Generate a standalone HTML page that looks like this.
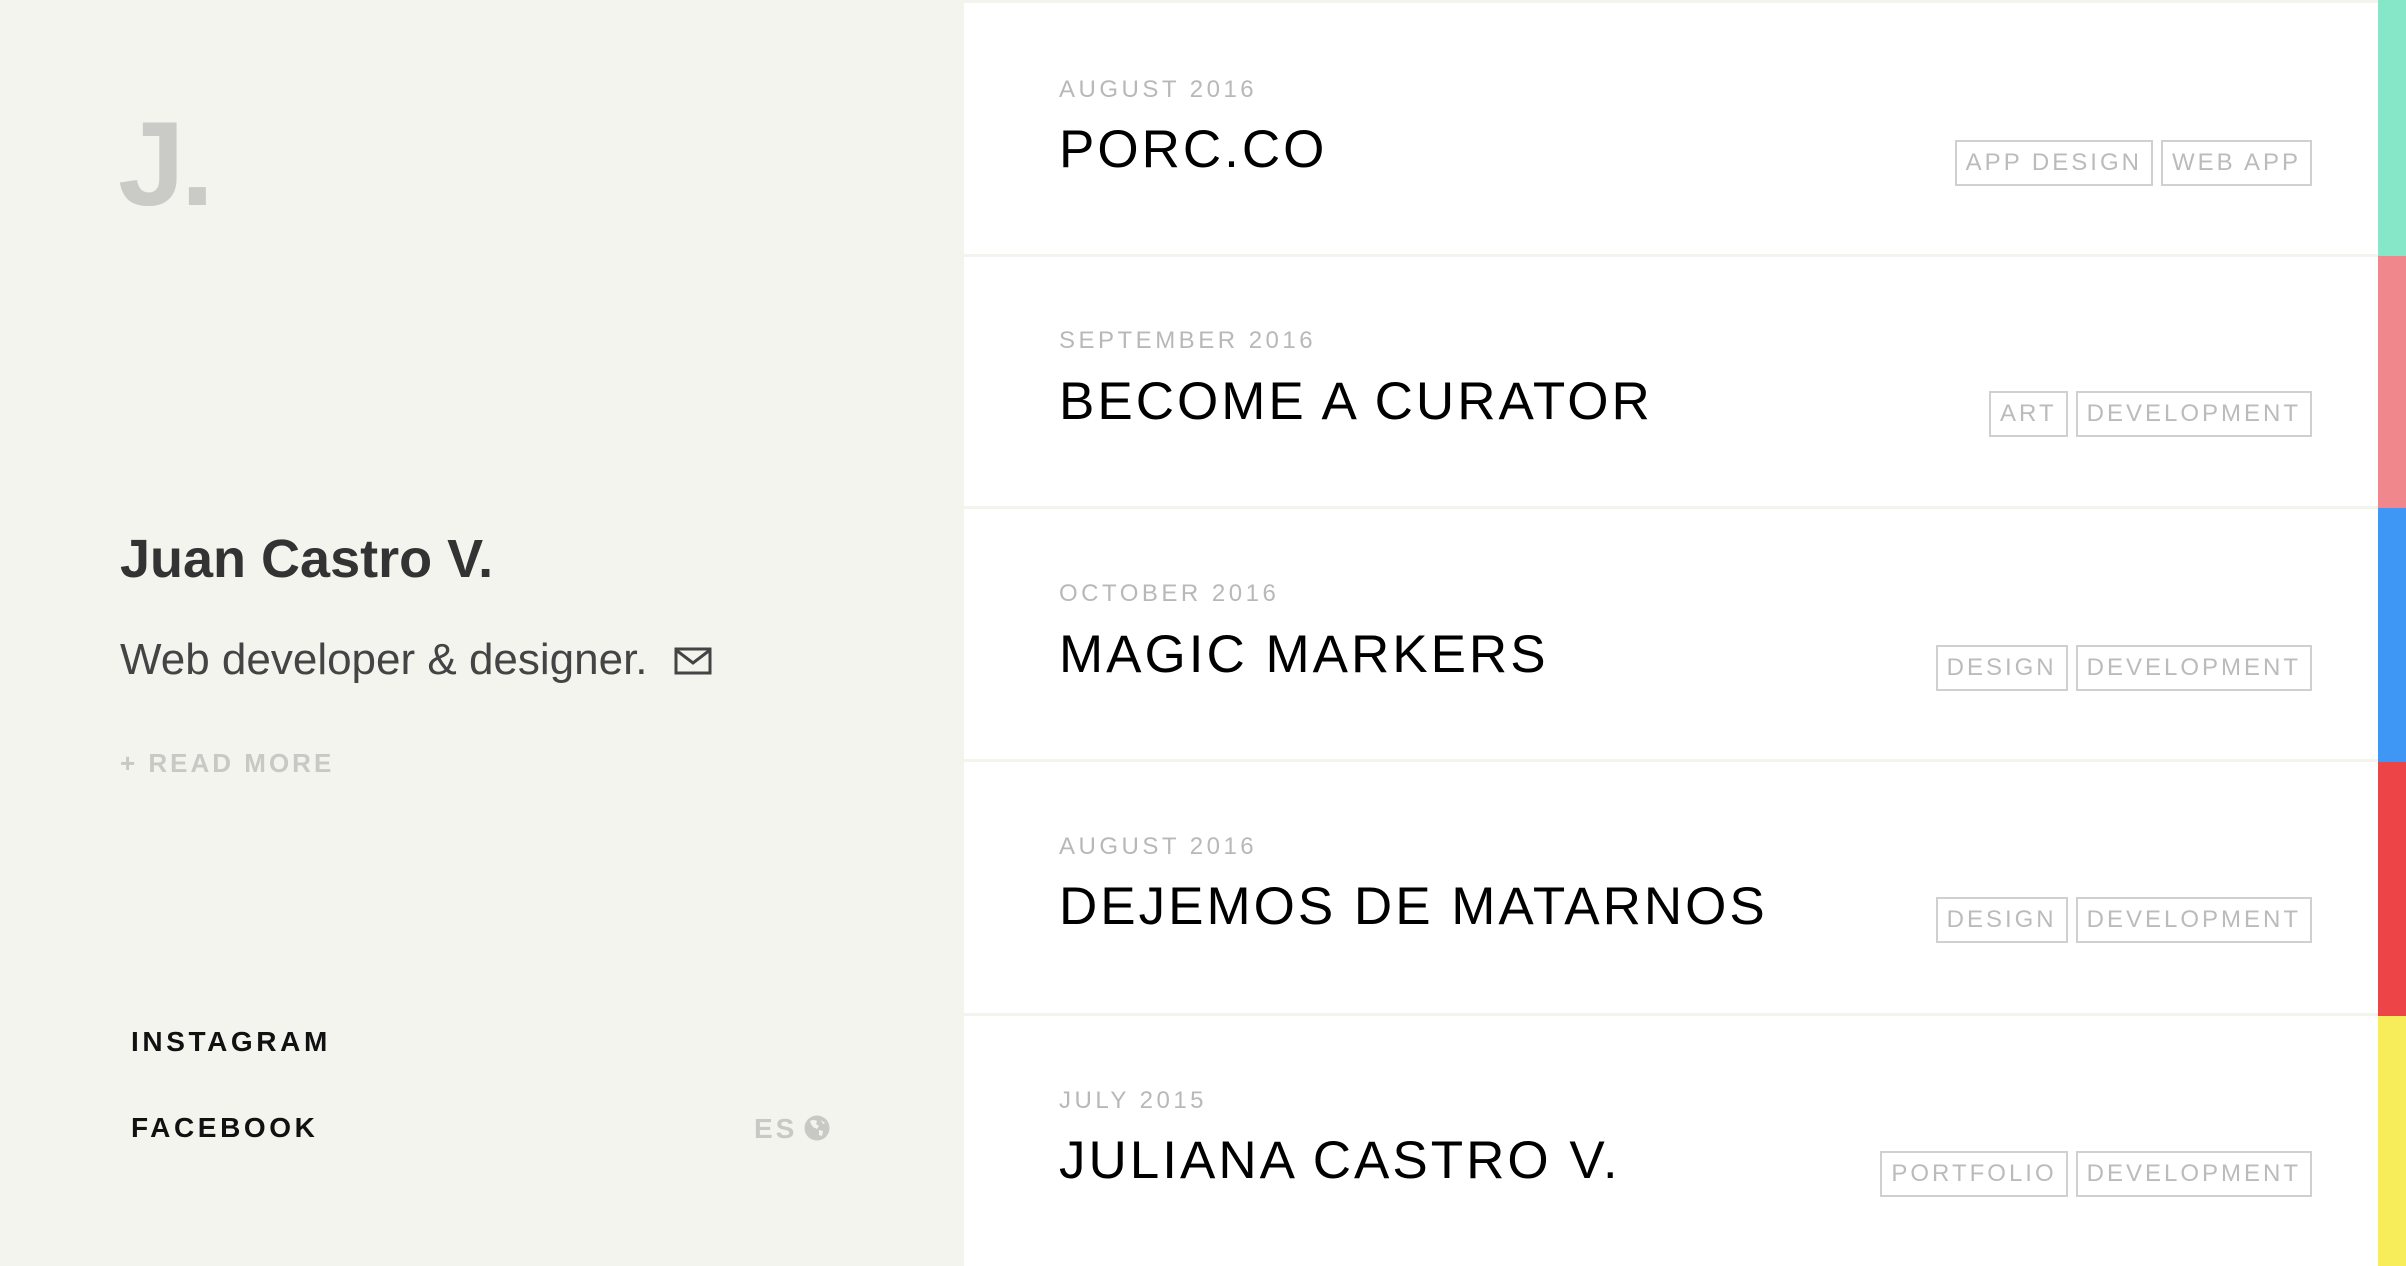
<!DOCTYPE html>
<html><head><meta charset="utf-8"><style>
*{margin:0;padding:0;box-sizing:border-box}
body{width:2406px;height:1266px;overflow:hidden;background:#f4f4ef;font-family:"Liberation Sans",sans-serif;position:relative}
.left{position:absolute;left:0;top:0;width:964px;height:1266px;background:#f4f4ef}
.logo{position:absolute;left:118px;top:104px;font-size:120px;font-weight:bold;color:#cacac6;letter-spacing:-4px;line-height:1}
.name{position:absolute;left:120px;top:532px;font-size:54px;font-weight:bold;color:#333;line-height:1}
.tag{position:absolute;left:120px;top:638px;font-size:44px;color:#444;line-height:1}
.more{position:absolute;left:120px;top:748px;font-size:26px;font-weight:bold;color:#c8c8c4;letter-spacing:3px}
.soc{position:absolute;left:131px;font-size:28px;font-weight:bold;color:#111;letter-spacing:3.6px}
.es{position:absolute;left:754px;top:1113px;font-size:28px;font-weight:bold;color:#c8c8c4;letter-spacing:3px}
.right{position:absolute;left:964px;top:0;width:1414px;height:1266px;background:#f4f4ef}
.row{position:absolute;left:0;width:1414px;background:#fff}
.date{position:absolute;left:95px;font-size:24px;color:#b8b8b8;letter-spacing:3.5px}
.title{position:absolute;left:95px;font-size:53px;color:#000;letter-spacing:3px;line-height:1}
.tags{position:absolute;right:66px;display:flex;gap:8px}
.tags span{border:2px solid #d0d0d0;height:46px;line-height:42px;padding:0 9px;font-size:24px;color:#bbb;letter-spacing:3px}
.bar{position:absolute;left:2378px;width:28px}
</style></head><body>
<div class="left">
<div class="logo">J.</div>
<div class="name">Juan Castro V.</div>
<div class="tag">Web developer &amp; designer. <svg width="38" height="30" viewBox="0 0 38 30" style="margin-left:14px;vertical-align:-2px"><rect x="2" y="3" width="34" height="24" fill="none" stroke="#444" stroke-width="3"/><path d="M2 4 L19 17 L36 4" fill="none" stroke="#444" stroke-width="3"/></svg></div>
<div class="more">+ READ MORE</div>
<div class="soc" style="top:1026px">INSTAGRAM</div>
<div class="soc" style="top:1112px">FACEBOOK</div>
<div class="es">ES</div>
<svg style="position:absolute;left:804px;top:1115px" width="26" height="26" viewBox="0 0 26 26"><circle cx="13" cy="13" r="12.5" fill="#c8c8c4"/><path d="M6 6 Q10 4 13 6 L12 9 L15 11 L13 14 L9 12 L7 9 Z M15 15 L19 16 L18 21 L15 20 Z M17 5 L21 8 L19 9 Z" fill="#f4f4ef"/></svg>
</div>
<div class="right">
<div class="row" style="top:3px;height:251px"><div class="date" style="top:73px">AUGUST 2016</div><div class="title" style="top:120px">PORC.CO</div><div class="tags" style="top:137px"><span>APP DESIGN</span><span>WEB APP</span></div></div>
<div class="row" style="top:257px;height:249px"><div class="date" style="top:70px">SEPTEMBER 2016</div><div class="title" style="top:118px">BECOME A CURATOR</div><div class="tags" style="top:134px"><span>ART</span><span>DEVELOPMENT</span></div></div>
<div class="row" style="top:509px;height:250px"><div class="date" style="top:71px">OCTOBER 2016</div><div class="title" style="top:119px">MAGIC MARKERS</div><div class="tags" style="top:136px"><span>DESIGN</span><span>DEVELOPMENT</span></div></div>
<div class="row" style="top:762px;height:251px"><div class="date" style="top:71px">AUGUST 2016</div><div class="title" style="top:118px">DEJEMOS DE MATARNOS</div><div class="tags" style="top:135px"><span>DESIGN</span><span>DEVELOPMENT</span></div></div>
<div class="row" style="top:1016px;height:250px"><div class="date" style="top:71px">JULY 2015</div><div class="title" style="top:118px">JULIANA CASTRO V.</div><div class="tags" style="top:135px"><span>PORTFOLIO</span><span>DEVELOPMENT</span></div></div>
</div>
<div class="bar" style="top:0;height:256px;background:#86e6c8"></div>
<div class="bar" style="top:256px;height:252px;background:#f0878d"></div>
<div class="bar" style="top:508px;height:254px;background:#3e97f5"></div>
<div class="bar" style="top:762px;height:254px;background:#ec4447"></div>
<div class="bar" style="top:1016px;height:250px;background:#f7ec5a"></div>
</body></html>
